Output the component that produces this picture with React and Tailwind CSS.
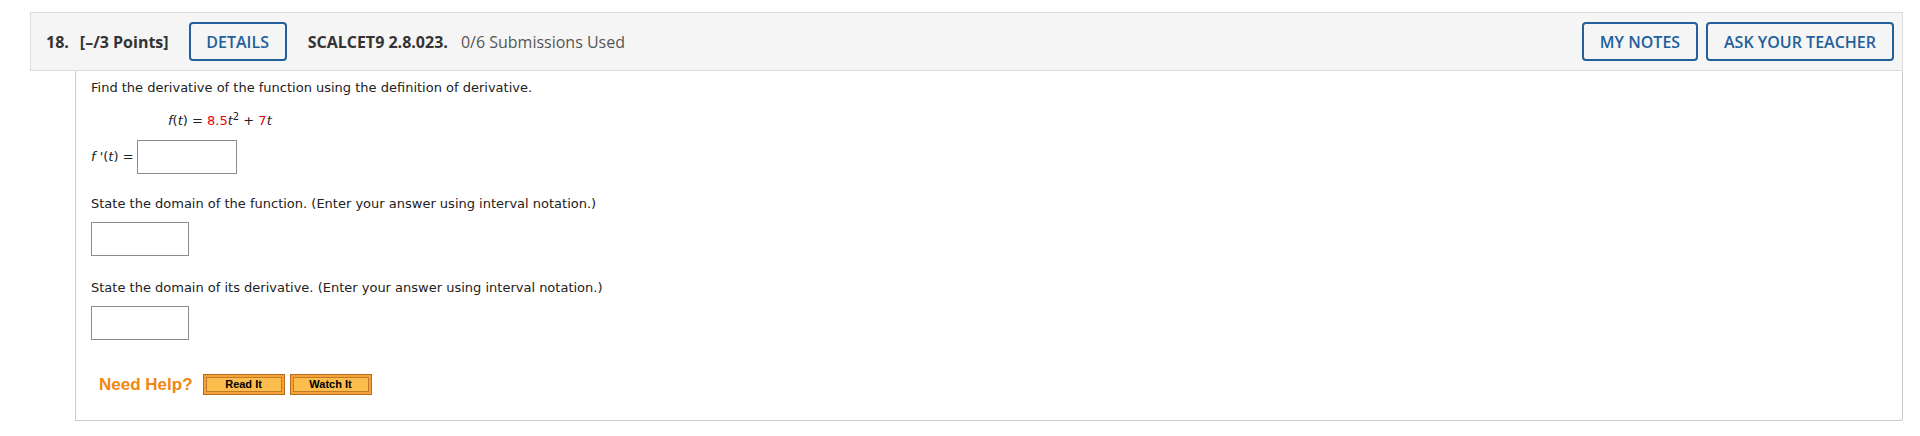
const HelpButton = ({ label }) => (
    <div className="w-[82px] h-[21px] border border-[#b86d16] bg-[#f5a23c] p-[2px]">
        <div className="h-full border border-[#c47a22] bg-[#fbbd4b] flex items-center justify-center text-[11px] font-bold text-black leading-none font-['Liberation_Sans',Arial,sans-serif]">
            {label}
        </div>
    </div>
);

const AnswerBox = ({ className = "" }) => (
    <div className={`h-[34px] border border-[#8c8c8c] bg-white ${className}`}></div>
);

const App = () => {
    return (
        <div className="w-[1920px] h-[436px] bg-white">
            <div className="ml-[30px] pt-[12px] w-[1873px]">
                {/* Header */}
                <div className="h-[59px] border border-[#dcdcdc] bg-[#f5f5f5] flex items-center pl-[15px] pr-[8px] font-['Open_Sans',sans-serif]">
                    <span className="text-[16px] font-bold text-[#333]">18.</span>
                    <span className="ml-[11px] text-[16px] font-bold text-[#333]">[–/3 Points]</span>
                    <button className="ml-[20px] w-[98px] h-[39px] border-2 border-[#23609a] rounded-[4px] text-[16px] font-semibold text-[#23609a]">
                        DETAILS
                    </button>
                    <span className="ml-[21px] text-[16px] font-bold text-[#333]">SCALCET9 2.8.023.</span>
                    <span className="ml-[13px] text-[16px] text-[#555]">0/6 Submissions Used</span>
                    <div className="ml-auto flex gap-[8px]">
                        <button className="w-[116px] h-[39px] border-2 border-[#23609a] rounded-[4px] text-[16px] font-semibold text-[#23609a]">
                            MY NOTES
                        </button>
                        <button className="w-[188px] h-[39px] border-2 border-[#23609a] rounded-[4px] text-[16px] font-semibold text-[#23609a]">
                            ASK YOUR TEACHER
                        </button>
                    </div>
                </div>

                {/* Question body */}
                <div className="ml-[45px] h-[350px] border-x border-b border-[#cccccc] rounded-br-[3px] pl-[15px] pt-[9px] font-['DejaVu_Sans',Verdana,sans-serif] text-[13px] leading-[16px] text-[#222]">
                    <p>Find the derivative of the function using the definition of derivative.</p>

                    <p className="mt-[17px] ml-[77px]">
                        <i>f</i>(<i>t</i>) = <span className="text-[#e8000b]">8.5</span><i>t</i>
                        <sup className="text-[10px]">2</sup> + <span className="text-[#e8000b]">7</span><i>t</i>
                    </p>

                    <div className="mt-[11px] flex items-center">
                        <span className="w-[46px]">
                            <i>f</i> '(<i>t</i>) =
                        </span>
                        <AnswerBox className="w-[100px]" />
                    </div>

                    <p className="mt-[22px]">State the domain of the function. (Enter your answer using interval notation.)</p>
                    <AnswerBox className="mt-[10px] w-[98px]" />

                    <p className="mt-[24px]">State the domain of its derivative. (Enter your answer using interval notation.)</p>
                    <AnswerBox className="mt-[10px] w-[98px]" />

                    <div className="mt-[34px] ml-[8px] flex items-center">
                        <span className="text-[17px] font-bold text-[#f0870f] font-['Liberation_Sans',Arial,sans-serif]">Need Help?</span>
                        <div className="ml-[10px] flex gap-[5px]">
                            <HelpButton label="Read It" />
                            <HelpButton label="Watch It" />
                        </div>
                    </div>
                </div>
            </div>
        </div>
    );
};

export default App;
